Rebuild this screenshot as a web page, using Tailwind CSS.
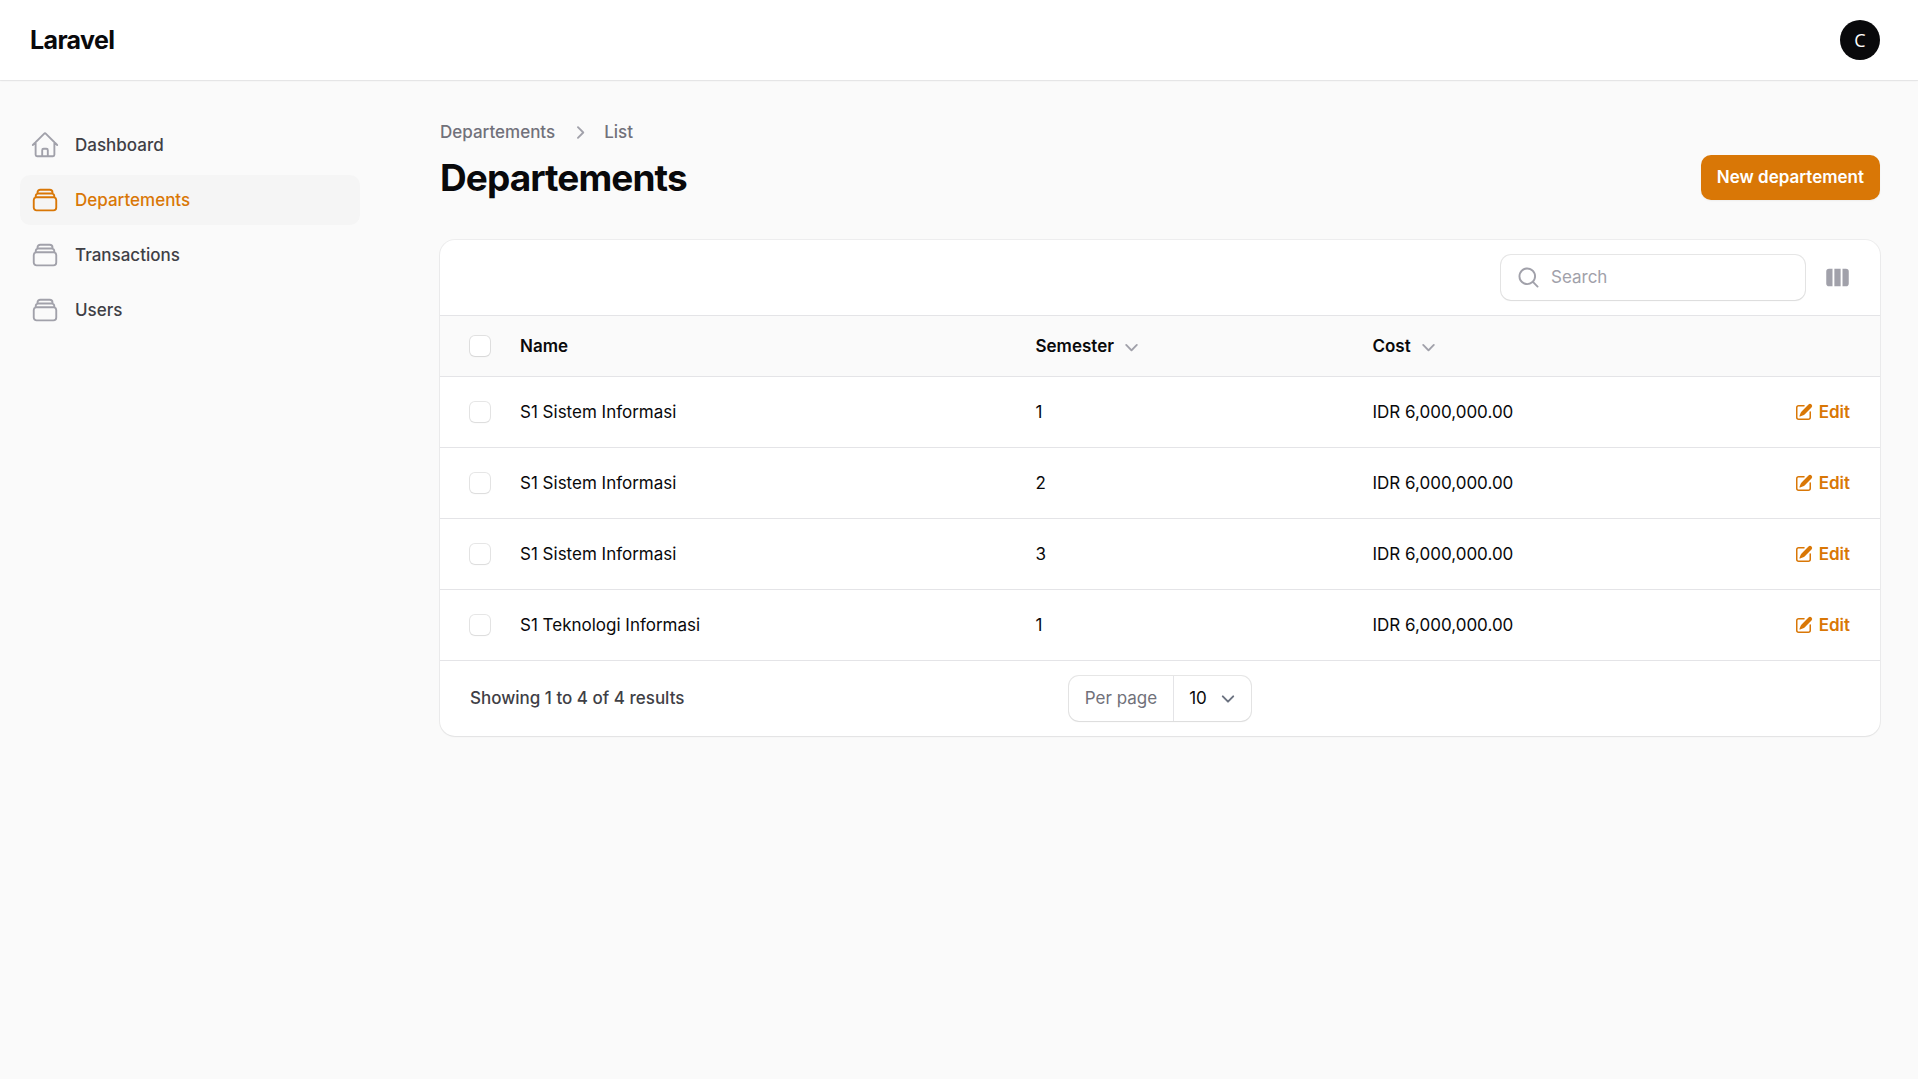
<!DOCTYPE html>
<html lang="en">
<head>
<meta charset="utf-8">
<meta name="viewport" content="width=device-width, initial-scale=1">
<title>Departements - Laravel</title>
<script src="https://cdn.jsdelivr.net/npm/@tailwindcss/browser@4"></script>
</head>
<body class="min-h-screen bg-[#fafafa] font-['Inter',sans-serif] text-[17px] leading-[25px] text-[#09090b] antialiased">
<svg class="hidden" aria-hidden="true">
  <symbol id="home" viewBox="0 0 24 24"><path fill="none" stroke="currentColor" stroke-width="1.5" stroke-linecap="round" stroke-linejoin="round" d="m2.25 12 8.954-8.955c.44-.439 1.152-.439 1.591 0L21.75 12M4.5 9.75v10.125c0 .621.504 1.125 1.125 1.125H9.75v-4.875c0-.621.504-1.125 1.125-1.125h2.25c.621 0 1.125.504 1.125 1.125V21h4.125c.621 0 1.125-.504 1.125-1.125V9.75M8.25 21h8.25"/></symbol>
  <symbol id="stack" viewBox="0 0 24 24"><path fill="none" stroke="currentColor" stroke-width="1.5" stroke-linecap="round" stroke-linejoin="round" d="M6 6.878V6a2.25 2.25 0 0 1 2.25-2.25h7.5A2.25 2.25 0 0 1 18 6v.878m-12 0c.235-.083.487-.128.75-.128h10.5c.263 0 .515.045.75.128m-12 0A2.25 2.25 0 0 0 4.5 9v.878m13.5-3A2.25 2.25 0 0 1 19.5 9v.878m0 0a2.246 2.246 0 0 0-.75-.128H5.25c-.263 0-.515.045-.75.128m15 0A2.25 2.25 0 0 1 21 12v6a2.25 2.25 0 0 1-2.25 2.25H5.25A2.25 2.25 0 0 1 3 18v-6c0-.98.626-1.813 1.5-2.122"/></symbol>
  <symbol id="chevron-right" viewBox="0 0 20 20"><path fill="currentColor" fill-rule="evenodd" d="M8.22 5.22a.75.75 0 0 1 1.06 0l4.25 4.25a.75.75 0 0 1 0 1.06l-4.25 4.25a.75.75 0 0 1-1.06-1.06L11.94 10 8.22 6.28a.75.75 0 0 1 0-1.06Z"/></symbol>
  <symbol id="chevron-down" viewBox="0 0 20 20"><path fill="currentColor" fill-rule="evenodd" d="M5.22 8.22a.75.75 0 0 1 1.06 0L10 11.94l3.72-3.72a.75.75 0 1 1 1.06 1.06l-4.25 4.25a.75.75 0 0 1-1.06 0L5.22 9.28a.75.75 0 0 1 0-1.06Z"/></symbol>
  <symbol id="search-icon" viewBox="0 0 20 20"><path fill="currentColor" fill-rule="evenodd" d="M9 3.5a5.5 5.5 0 1 0 0 11 5.5 5.5 0 0 0 0-11ZM2 9a7 7 0 1 1 12.452 4.391l3.328 3.329a.75.75 0 1 1-1.06 1.06l-3.329-3.328A7 7 0 0 1 2 9Z"/></symbol>
  <symbol id="columns" viewBox="0 0 20 20"><path fill="currentColor" d="M14 17h2.75A2.25 2.25 0 0 0 19 14.75v-9.5A2.25 2.25 0 0 0 16.75 3H14v14ZM12.5 3h-5v14h5V3ZM3.25 3H6v14H3.25A2.25 2.25 0 0 1 1 14.75v-9.5A2.25 2.25 0 0 1 3.25 3Z"/></symbol>
  <symbol id="pencil" viewBox="0 0 20 20"><path fill="currentColor" d="m5.433 13.917 1.262-3.155A4 4 0 0 1 7.58 9.42l6.92-6.918a2.121 2.121 0 0 1 3 3l-6.92 6.918c-.383.383-.84.685-1.343.886l-3.154 1.262a.5.5 0 0 1-.65-.65Z"/><path fill="currentColor" d="M3.5 5.75c0-.69.56-1.25 1.25-1.25H10A.75.75 0 0 0 10 3H4.75A2.75 2.75 0 0 0 2 5.75v9.5A2.75 2.75 0 0 0 4.75 18h9.5A2.75 2.75 0 0 0 17 15.25V10a.75.75 0 0 0-1.5 0v5.25c0 .69-.56 1.25-1.25 1.25h-9.5c-.69 0-1.25-.56-1.25-1.25v-9.5Z"/></symbol>
</svg>

<header class="flex h-20 items-center justify-between bg-white pr-[38px] pl-[30px] shadow-xs ring-1 ring-[#09090b]/5">
  <a href="#" class="text-[25px] leading-8 font-bold tracking-tight">Laravel</a>
  <button type="button" aria-label="User menu" class="flex size-10 items-center justify-center rounded-full bg-[#09090b] font-['Open_Sans',sans-serif] text-[18px] text-white">C</button>
</header>

<div class="flex">
  <nav aria-label="Main" class="w-[400px] shrink-0 py-10 pr-10 pl-5 font-medium text-[#3f3f46]">
    <ul class="flex flex-col gap-[5px]">
      <li><a href="#" class="flex items-center gap-[15px] rounded-[10px] p-[10px]"><svg class="size-[30px] text-[#a1a1aa]"><use href="#home"/></svg>Dashboard</a></li>
      <li><a href="#" aria-current="page" class="flex items-center gap-[15px] rounded-[10px] bg-[#f5f5f5] p-[10px] text-[#d97706]"><svg class="size-[30px]"><use href="#stack"/></svg>Departements</a></li>
      <li><a href="#" class="flex items-center gap-[15px] rounded-[10px] p-[10px]"><svg class="size-[30px] text-[#a1a1aa]"><use href="#stack"/></svg>Transactions</a></li>
      <li><a href="#" class="flex items-center gap-[15px] rounded-[10px] p-[10px]"><svg class="size-[30px] text-[#a1a1aa]"><use href="#stack"/></svg>Users</a></li>
    </ul>
  </nav>

  <main class="min-w-0 flex-1 py-10 pr-[38px] pl-10">
    <nav aria-label="Breadcrumb" class="mb-[10px] flex items-center gap-3 font-medium text-[#71717a]">
      <a href="#">Departements</a>
      <svg class="size-[25px] text-[#a1a1aa]"><use href="#chevron-right"/></svg>
      <a href="#">List</a>
    </nav>
    <div class="flex items-center justify-between">
      <h1 class="text-[37px] leading-[45px] font-bold tracking-tight">Departements</h1>
      <button type="button" class="rounded-[10px] bg-[#d97706] px-4 py-[10px] font-semibold text-white shadow-xs">New departement</button>
    </div>

    <section class="mt-10 overflow-hidden rounded-[15px] bg-white shadow-xs ring-1 ring-[#09090b]/5">
      <div class="flex items-center justify-end gap-5 px-[30px] py-[15px]">
        <label class="flex w-[304px] items-center gap-[10px] rounded-[10px] px-[15px] py-[10px] shadow-xs ring-1 ring-[#09090b]/10">
          <svg class="size-[25px] shrink-0 text-[#a1a1aa]"><use href="#search-icon"/></svg>
          <input type="search" aria-label="Search" placeholder="Search" class="h-[25px] min-w-0 flex-1 bg-transparent outline-none placeholder:text-[#a1a1aa]">
        </label>
        <button type="button" aria-label="Toggle columns" class="text-[#a1a1aa]"><svg class="size-[25px]"><use href="#columns"/></svg></button>
      </div>

      <table class="w-full table-fixed border-t border-[#e4e4e7] text-left">
        <thead class="bg-[#fafafa]">
          <tr class="h-[61px] border-b border-[#e4e4e7]">
            <th class="w-[65px] pl-[30px]"><input type="checkbox" aria-label="Select all" class="block size-5 appearance-none rounded-[5px] bg-white shadow-xs ring-1 ring-[#09090b]/10"></th>
            <th class="w-[35.8%] px-[15px] font-semibold">Name</th>
            <th class="w-[23.4%] px-[15px] font-semibold"><button type="button" class="flex items-center gap-[5px] font-semibold">Semester<svg class="size-[25px] text-[#a1a1aa]"><use href="#chevron-down"/></svg></button></th>
            <th class="px-[15px] font-semibold"><button type="button" class="flex items-center gap-[5px] font-semibold">Cost<svg class="size-[25px] text-[#a1a1aa]"><use href="#chevron-down"/></svg></button></th>
            <th class="w-[120px]"></th>
          </tr>
        </thead>
        <tbody>
          <tr class="h-[71px] border-b border-[#e4e4e7]">
            <td class="pl-[30px]"><input type="checkbox" aria-label="Select row 1" class="block size-5 appearance-none rounded-[5px] bg-white shadow-xs ring-1 ring-[#09090b]/10"></td>
            <td class="px-[15px]">S1 Sistem Informasi</td><td class="px-[15px]">1</td><td class="px-[15px]">IDR 6,000,000.00</td>
            <td class="pr-[30px]"><a href="#" class="flex items-center justify-end gap-[5px] font-semibold text-[#d97706]"><svg class="size-5"><use href="#pencil"/></svg>Edit</a></td>
          </tr>
          <tr class="h-[71px] border-b border-[#e4e4e7]">
            <td class="pl-[30px]"><input type="checkbox" aria-label="Select row 2" class="block size-5 appearance-none rounded-[5px] bg-white shadow-xs ring-1 ring-[#09090b]/10"></td>
            <td class="px-[15px]">S1 Sistem Informasi</td><td class="px-[15px]">2</td><td class="px-[15px]">IDR 6,000,000.00</td>
            <td class="pr-[30px]"><a href="#" class="flex items-center justify-end gap-[5px] font-semibold text-[#d97706]"><svg class="size-5"><use href="#pencil"/></svg>Edit</a></td>
          </tr>
          <tr class="h-[71px] border-b border-[#e4e4e7]">
            <td class="pl-[30px]"><input type="checkbox" aria-label="Select row 3" class="block size-5 appearance-none rounded-[5px] bg-white shadow-xs ring-1 ring-[#09090b]/10"></td>
            <td class="px-[15px]">S1 Sistem Informasi</td><td class="px-[15px]">3</td><td class="px-[15px]">IDR 6,000,000.00</td>
            <td class="pr-[30px]"><a href="#" class="flex items-center justify-end gap-[5px] font-semibold text-[#d97706]"><svg class="size-5"><use href="#pencil"/></svg>Edit</a></td>
          </tr>
          <tr class="h-[71px] border-b border-[#e4e4e7]">
            <td class="pl-[30px]"><input type="checkbox" aria-label="Select row 4" class="block size-5 appearance-none rounded-[5px] bg-white shadow-xs ring-1 ring-[#09090b]/10"></td>
            <td class="px-[15px]">S1 Teknologi Informasi</td><td class="px-[15px]">1</td><td class="px-[15px]">IDR 6,000,000.00</td>
            <td class="pr-[30px]"><a href="#" class="flex items-center justify-end gap-[5px] font-semibold text-[#d97706]"><svg class="size-5"><use href="#pencil"/></svg>Edit</a></td>
          </tr>
        </tbody>
      </table>

      <div class="grid grid-cols-[1fr_auto_1fr] items-center px-[30px] py-[15px]">
        <span class="font-medium text-[#3f3f46]">Showing 1 to 4 of 4 results</span>
        <div class="flex h-[45px] items-center rounded-[10px] shadow-xs ring-1 ring-[#09090b]/10">
          <label for="per-page" class="px-4 text-[#71717a]">Per page</label>
          <div class="grid h-full items-center border-l border-[#e4e4e7]">
            <select id="per-page" class="col-start-1 row-start-1 h-full w-[77px] appearance-none bg-transparent pl-[15px] outline-none"><option>10</option><option>25</option><option>50</option></select>
            <svg viewBox="0 0 20 20" class="pointer-events-none col-start-1 row-start-1 mr-[10px] size-[26px] justify-self-end text-[#6b7280]"><path fill="none" stroke="currentColor" stroke-width="1.5" stroke-linecap="round" stroke-linejoin="round" d="m6 8 4 4 4-4"/></svg>
          </div>
        </div>
      </div>
    </section>
  </main>
</div>
</body>
</html>
